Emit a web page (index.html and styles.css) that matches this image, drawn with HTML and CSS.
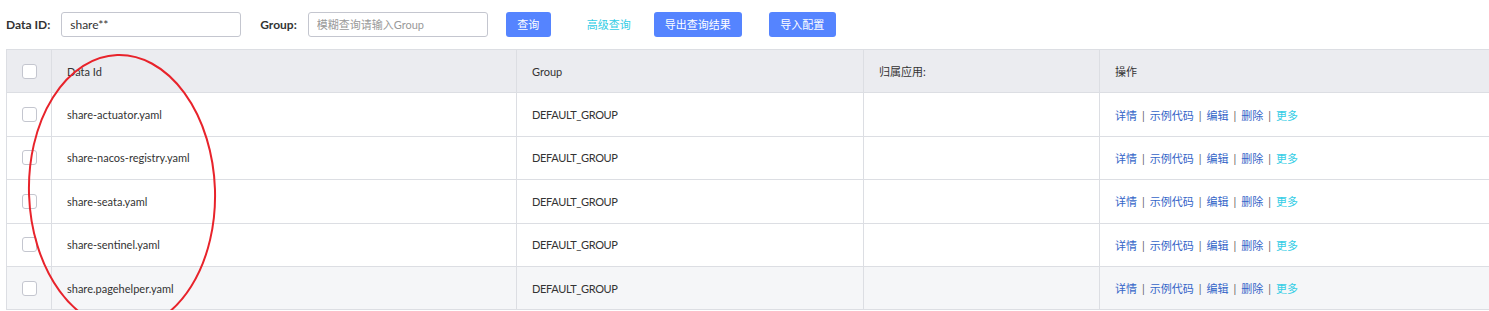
FILE: index.html
```html
<!DOCTYPE html>
<html lang="zh-CN">
<head>
    <meta charset="UTF-8">
    <meta name="viewport" content="width=device-width, initial-scale=1.0">
    <title>配置列表</title>
    <link rel="stylesheet" href="styles.css">
</head>
<body>
    <div class="search-bar">
        <label class="field-label" for="dataId">Data ID:</label>
        <input class="field-input" id="dataId" type="text" value="share**">
        <label class="field-label group-label" for="group">Group:</label>
        <input class="field-input" id="group" type="text" placeholder="模糊查询请输入Group">
        <button class="btn btn-query" type="button">查询</button>
        <a class="adv-link" href="#">高级查询</a>
        <button class="btn btn-export" type="button">导出查询结果</button>
        <button class="btn btn-import" type="button">导入配置</button>
    </div>

    <div class="table-wrap">
        <table class="config-table">
            <thead>
                <tr>
                    <th class="col-check"><span class="checkbox"></span></th>
                    <th class="col-id">Data Id</th>
                    <th class="col-group">Group</th>
                    <th class="col-app">归属应用:</th>
                    <th class="col-ops">操作</th>
                </tr>
            </thead>
            <tbody>
                <tr>
                    <td class="col-check"><span class="checkbox"></span></td>
                    <td>share-actuator.yaml</td>
                    <td class="group-cell">DEFAULT_GROUP</td>
                    <td></td>
                    <td class="ops"><a href="#">详情</a><span class="sep">|</span><a href="#">示例代码</a><span class="sep">|</span><a href="#">编辑</a><span class="sep">|</span><a href="#">删除</a><span class="sep">|</span><a class="more" href="#">更多</a></td>
                </tr>
                <tr>
                    <td class="col-check"><span class="checkbox"></span></td>
                    <td>share-nacos-registry.yaml</td>
                    <td class="group-cell">DEFAULT_GROUP</td>
                    <td></td>
                    <td class="ops"><a href="#">详情</a><span class="sep">|</span><a href="#">示例代码</a><span class="sep">|</span><a href="#">编辑</a><span class="sep">|</span><a href="#">删除</a><span class="sep">|</span><a class="more" href="#">更多</a></td>
                </tr>
                <tr>
                    <td class="col-check"><span class="checkbox"></span></td>
                    <td>share-seata.yaml</td>
                    <td class="group-cell">DEFAULT_GROUP</td>
                    <td></td>
                    <td class="ops"><a href="#">详情</a><span class="sep">|</span><a href="#">示例代码</a><span class="sep">|</span><a href="#">编辑</a><span class="sep">|</span><a href="#">删除</a><span class="sep">|</span><a class="more" href="#">更多</a></td>
                </tr>
                <tr>
                    <td class="col-check"><span class="checkbox"></span></td>
                    <td>share-sentinel.yaml</td>
                    <td class="group-cell">DEFAULT_GROUP</td>
                    <td></td>
                    <td class="ops"><a href="#">详情</a><span class="sep">|</span><a href="#">示例代码</a><span class="sep">|</span><a href="#">编辑</a><span class="sep">|</span><a href="#">删除</a><span class="sep">|</span><a class="more" href="#">更多</a></td>
                </tr>
                <tr class="hover">
                    <td class="col-check"><span class="checkbox"></span></td>
                    <td>share.pagehelper.yaml</td>
                    <td class="group-cell">DEFAULT_GROUP</td>
                    <td></td>
                    <td class="ops"><a href="#">详情</a><span class="sep">|</span><a href="#">示例代码</a><span class="sep">|</span><a href="#">编辑</a><span class="sep">|</span><a href="#">删除</a><span class="sep">|</span><a class="more" href="#">更多</a></td>
                </tr>
            </tbody>
        </table>

        <!-- hand-drawn annotation over the Data Id column -->
        <svg class="annotation" width="260" height="300" viewBox="0 0 260 300">
            <ellipse cx="116" cy="143" rx="93" ry="137" transform="rotate(-2 116 143)" fill="none" stroke="#e8232b" stroke-width="2"/>
        </svg>
    </div>
</body>
</html>
```

FILE: styles.css
```css
body {
    margin: 0;
    padding: 0 0 0 6px;
    font-family: Lato, "Noto Sans CJK SC", sans-serif;
    font-size: 11px;
    color: #333333;
    background: #ffffff;
    overflow: hidden;
}
.search-bar {
    display: flex;
    align-items: center;
    height: 48px;
}
.field-label {
    font-weight: bold;
    font-size: 12px;
    color: #333333;
    margin-right: 11px;
}
.group-label {
    margin-left: 19px;
}
.field-input {
    box-sizing: border-box;
    width: 180px;
    height: 25px;
    padding: 0 8px;
    border: 1px solid #c4c6cf;
    border-radius: 3px;
    font-family: Lato, "Noto Sans CJK SC", sans-serif;
    font-size: 12px;
    color: #333333;
    outline: none;
}
.field-input::placeholder {
    color: #999999;
    font-size: 11px;
}
.btn {
    box-sizing: border-box;
    height: 25px;
    padding: 0;
    border: none;
    border-radius: 3px;
    background: #5584ff;
    color: #ffffff;
    font-family: Lato, "Noto Sans CJK SC", sans-serif;
    font-size: 11px;
    cursor: pointer;
}
.btn-query {
    width: 45px;
    margin-left: 18px;
}
.adv-link {
    margin-left: 36px;
    color: #33cde5;
    text-decoration: none;
}
.btn-export {
    width: 88px;
    margin-left: 23px;
}
.btn-import {
    width: 67px;
    margin-left: 27px;
}
.table-wrap {
    position: relative;
    margin-top: 1px;
}
.config-table {
    width: 1490px;
    border-collapse: collapse;
    table-layout: fixed;
}
.config-table th,
.config-table td {
    height: 42.4px;
    padding: 0 15px;
    border: 1px solid #dcdee3;
    text-align: left;
    font-weight: normal;
    color: #333333;
    white-space: nowrap;
}
.config-table th {
    background: #ebecf0;
}
.config-table tr.hover td {
    background: #f5f6f8;
}
.col-check {
    width: 14px;
}
.config-table .col-check {
    padding: 0 15px 0 15px;
}
.col-id {
    width: 434px;
}
.col-group {
    width: 316px;
}
.col-app {
    width: 205px;
}
.group-cell {
    letter-spacing: -0.35px;
}
.checkbox {
    display: block;
    box-sizing: border-box;
    width: 15px;
    height: 15px;
    border: 1px solid #c4c6cf;
    border-radius: 3px;
    background: #ffffff;
}
.ops a {
    color: #3465c8;
    text-decoration: none;
}
.ops a.more {
    color: #33cde5;
}
.ops .sep {
    margin: 0 5px;
    color: #666666;
}
.annotation {
    position: absolute;
    left: 0;
    top: 0;
    pointer-events: none;
}
```
